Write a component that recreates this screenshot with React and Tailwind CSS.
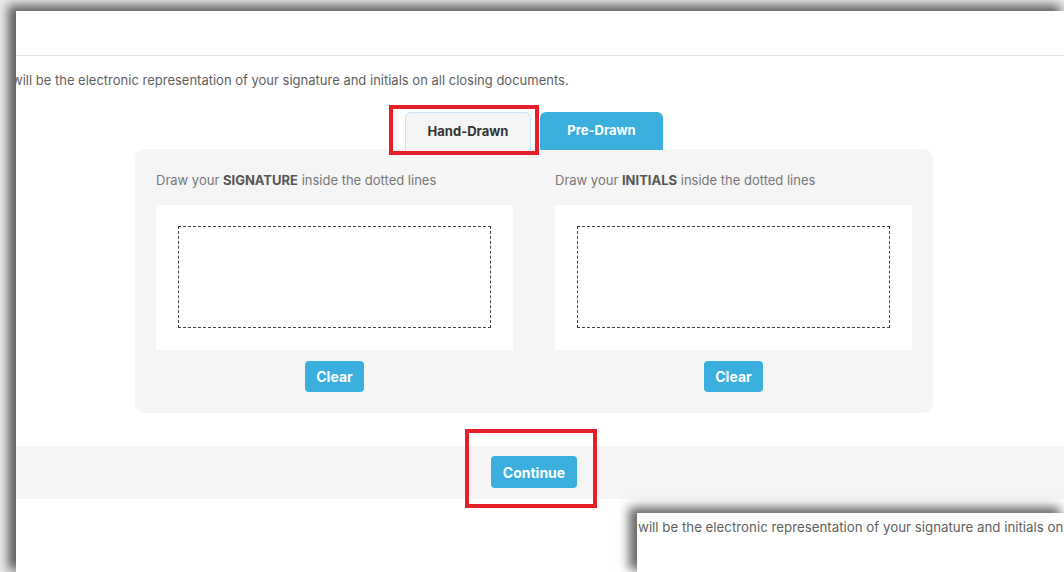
import React from "react";

const font = { fontFamily: "Inter, 'Noto Sans', sans-serif" };

const SignaturePad = ({ what }) => (
  <div className="flex flex-col w-[357px]">
    <p className="text-[13px] leading-[18px] text-[#777]">
      Draw your <span className="font-bold text-[#555]">{what}</span> inside
      the dotted lines
    </p>
    <div className="mt-[16px] h-[145px] bg-white px-[22px] pt-[21px] pb-[22px]">
      <div className="h-full border border-dashed border-[#444]" />
    </div>
    <div className="mt-[11px] flex justify-center">
      <button className="h-[31px] w-[59px] rounded-[4px] bg-[#3aaedc] text-[14px] font-bold text-white">
        Clear
      </button>
    </div>
  </div>
);

const Highlight = ({ className }) => (
  <div
    className={`pointer-events-none absolute border-[4px] border-[#e61e28] ${className}`}
  />
);

export default function App() {
  return (
    <div
      className="relative h-[572px] w-[1064px] overflow-hidden bg-[#ececec]"
      style={font}
    >
      {/* main window */}
      <div className="absolute left-[16px] top-[11px] right-0 bottom-0 overflow-hidden bg-white shadow-[-6px_-4px_10px_2px_rgba(0,0,0,0.6)]">
        <div className="h-[45px] border-b border-[#e3e3e3]" />
        <div className="w-[1036px]">
          <p className="mt-[15px] -ml-[4px] text-[13px] leading-[18px] text-[#5f5f5f] whitespace-nowrap">
            will be the electronic representation of your signature and
            initials on all closing documents.
          </p>

          <div className="relative mt-[23px] ml-[119px] w-[798px]">
            <div className="flex justify-center gap-[9px]">
              <div className="flex h-[38px] w-[126px] items-center justify-center rounded-t-[6px] border border-b-0 border-[#c6e5f3] bg-[#f5f5f5] text-[13px] font-bold text-[#333]">
                Hand-Drawn
              </div>
              <div className="flex h-[38px] w-[123px] items-center justify-center rounded-t-[6px] bg-[#3aaedc] text-[13px] font-bold text-white">
                Pre-Drawn
              </div>
            </div>
            <div className="-mt-px flex justify-between rounded-[10px] bg-[#f5f5f5] px-[21px] pt-[22px] pb-[21px]">
              <SignaturePad what="SIGNATURE" />
              <SignaturePad what="INITIALS" />
            </div>
          </div>
        </div>

        <div className="mt-[33px] h-[53px] bg-[#f5f5f5]">
          <div className="flex w-[1036px] justify-center pt-[10px]">
            <button className="h-[32px] w-[86px] rounded-[4px] bg-[#3aaedc] text-[14px] font-bold text-white">
              Continue
            </button>
          </div>
        </div>
      </div>

      <Highlight className="left-[389px] top-[105px] h-[50px] w-[150px]" />
      <Highlight className="left-[465px] top-[429px] h-[79px] w-[132px]" />

      {/* second window peeking in */}
      <div className="absolute left-[637px] top-[513px] right-0 bottom-0 overflow-hidden bg-white shadow-[-6px_-4px_10px_2px_rgba(0,0,0,0.6)]">
        <p className="ml-[1px] mt-[5px] text-[13.3px] leading-[18px] text-[#5f5f5f] whitespace-nowrap">
          will be the electronic representation of your signature and initials
          on
        </p>
      </div>
    </div>
  );
}
